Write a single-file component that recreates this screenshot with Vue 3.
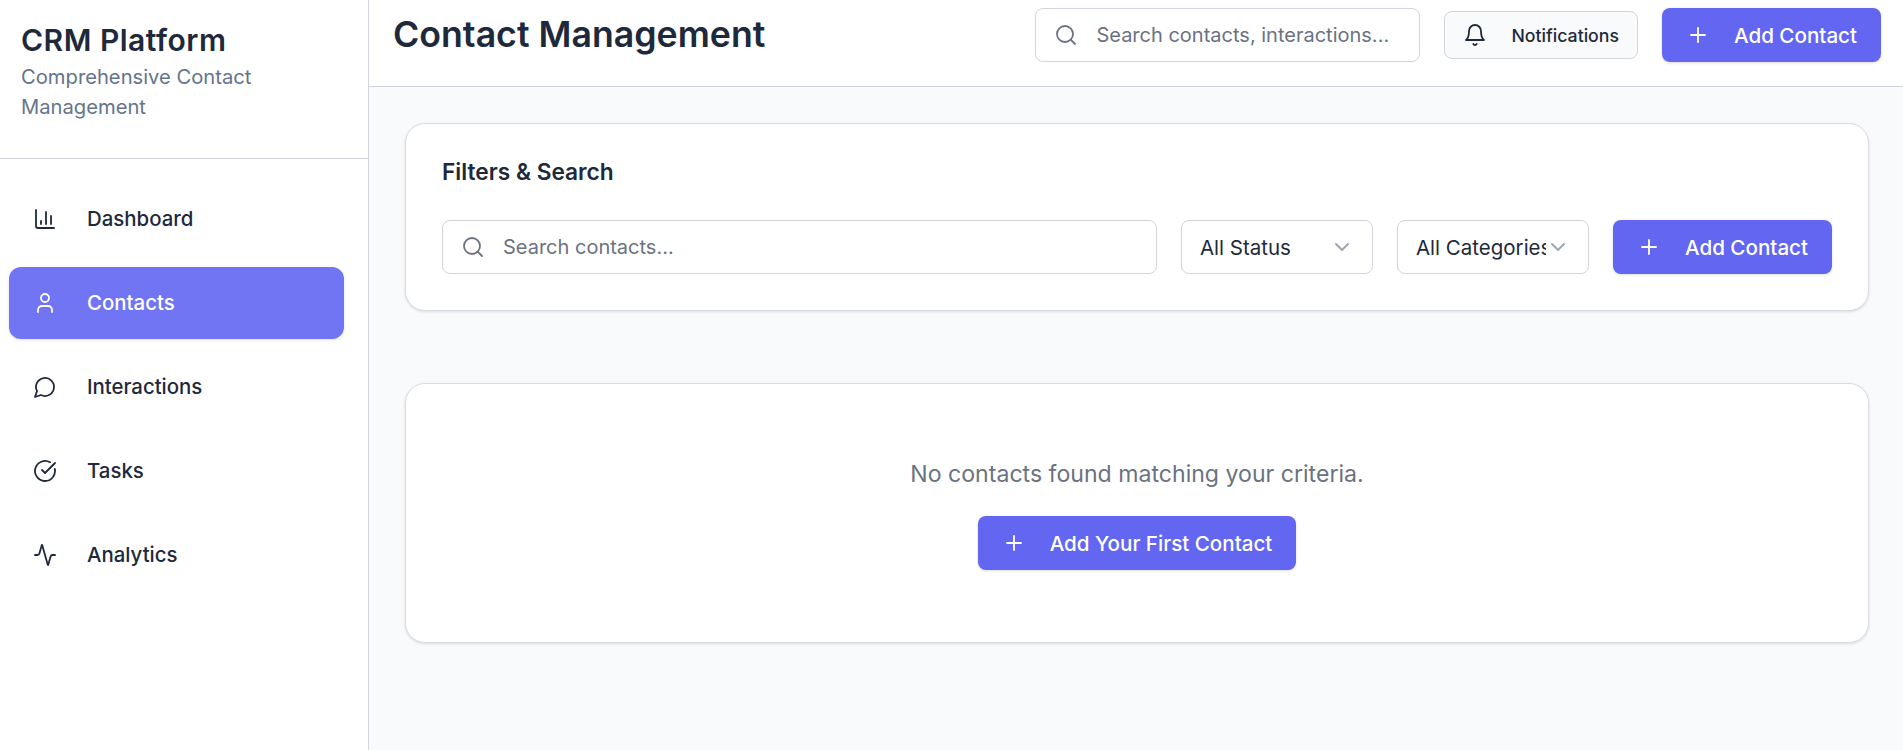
<script setup>
const navItems = [
  { label: 'Dashboard', icon: 'chart' },
  { label: 'Contacts', icon: 'user', active: true },
  { label: 'Interactions', icon: 'message' },
  { label: 'Tasks', icon: 'check' },
  { label: 'Analytics', icon: 'activity' },
]
const iconPaths = {
  chart: ['M3 3v16a2 2 0 0 0 2 2h16', 'M18 17V9', 'M13 17V5', 'M8 17v-3'],
  user: ['M19 21v-2a4 4 0 0 0-4-4H9a4 4 0 0 0-4 4v2', 'M12 11a4 4 0 1 0 0-8 4 4 0 0 0 0 8z'],
  message: ['M7.9 20A9 9 0 1 0 4 16.1L2 22Z'],
  check: ['M21.801 10A10 10 0 1 1 17 3.335', 'm9 11 3 3L22 4'],
  activity: ['M22 12h-2.48a2 2 0 0 0-1.93 1.46l-2.35 8.36a.25.25 0 0 1-.48 0L9.24 2.18a.25.25 0 0 0-.48 0l-2.35 8.36A2 2 0 0 1 4.49 12H2'],
}
</script>

<template>
  <div class="app">
    <aside class="sidebar">
      <div class="brand">
        <h1>CRM Platform</h1>
        <p>Comprehensive Contact Management</p>
      </div>
      <nav class="nav">
        <a v-for="item in navItems" :key="item.label" class="nav-item" :class="{ active: item.active }">
          <svg class="icon" viewBox="0 0 24 24"><path v-for="d in iconPaths[item.icon]" :key="d" :d="d" /></svg>
          <span>{{ item.label }}</span>
        </a>
      </nav>
    </aside>
    <div class="main">
      <header class="topbar">
        <h2>Contact Management</h2>
        <div class="actions">
          <label class="search top-search">
            <svg class="icon" viewBox="0 0 24 24"><path d="m21 21-4.3-4.3" /><circle cx="11" cy="11" r="8" /></svg>
            <input placeholder="Search contacts, interactions..." />
          </label>
          <button class="btn ghost">
            <svg class="icon" viewBox="0 0 24 24"><path d="M10.3 21a1.94 1.94 0 0 0 3.4 0" /><path d="M6 8a6 6 0 0 1 12 0c0 7 3 9 3 9H3s3-2 3-9" /></svg>
            Notifications
          </button>
          <button class="btn primary">
            <svg class="icon" viewBox="0 0 24 24"><path d="M5 12h14" /><path d="M12 5v14" /></svg>
            Add Contact
          </button>
        </div>
      </header>
      <main class="content">
        <section class="card filters">
          <h3>Filters &amp; Search</h3>
          <div class="filter-row">
            <label class="search grow">
              <svg class="icon" viewBox="0 0 24 24"><path d="m21 21-4.3-4.3" /><circle cx="11" cy="11" r="8" /></svg>
              <input placeholder="Search contacts..." />
            </label>
            <div class="select-wrap">
              <select><option>All Status</option></select>
              <svg class="chev" viewBox="0 0 24 24"><path d="m6 9 6 6 6-6" /></svg>
            </div>
            <div class="select-wrap">
              <select><option>All Categories</option></select>
              <svg class="chev" viewBox="0 0 24 24"><path d="m6 9 6 6 6-6" /></svg>
            </div>
            <button class="btn primary">
              <svg class="icon" viewBox="0 0 24 24"><path d="M5 12h14" /><path d="M12 5v14" /></svg>
              Add Contact
            </button>
          </div>
        </section>
        <section class="card empty">
          <p>No contacts found matching your criteria.</p>
          <button class="btn primary">
            <svg class="icon" viewBox="0 0 24 24"><path d="M5 12h14" /><path d="M12 5v14" /></svg>
            Add Your First Contact
          </button>
        </section>
      </main>
    </div>
  </div>
</template>

<style>
html, body { margin: 0; background: #fff; }
</style>

<style scoped>
.app {
  display: flex;
  height: 750px;
  overflow: hidden;
  font-family: Inter, "Liberation Sans", sans-serif;
  color: #1e293b;
}
.icon {
  width: 24px;
  height: 24px;
  flex: none;
  fill: none;
  stroke: currentColor;
  stroke-width: 1.8;
  stroke-linecap: round;
  stroke-linejoin: round;
}
.sidebar {
  width: 368px;
  flex: none;
  background: #fff;
  border-right: 1px solid #d1d5db;
}
.brand {
  height: 136px;
  padding: 22px 22px 0 21px;
  border-bottom: 1px solid #d1d5db;
}
.brand h1 {
  margin: 0 0 3px;
  padding-bottom: 1px;
  font-size: 30px;
  letter-spacing: 0.5px;
  line-height: 36px;
  font-weight: 600;
}
.brand p {
  margin: 0;
  font-size: 20.2px;
  line-height: 30px;
  color: #64748b;
}
.nav {
  padding: 24px 24px 0 9px;
  display: flex;
  flex-direction: column;
  gap: 12px;
}
.nav-item {
  height: 72px;
  display: flex;
  align-items: center;
  gap: 30px;
  padding-left: 24px;
  border-radius: 12px;
  font-size: 20.4px;
  font-weight: 500;
}
.nav-item span { padding-bottom: 2px; }
.nav-item.active {
  background: #7175f3;
  color: #fff;
  box-shadow: 0 1px 3px rgba(0, 0, 0, 0.12);
}
.main {
  flex: 1;
  min-width: 0;
  background: #f9fafb;
  display: flex;
  flex-direction: column;
}
.topbar {
  height: 87px;
  box-sizing: border-box;
  flex: none;
  background: #fff;
  border-bottom: 1px solid #d1d5db;
  padding: 8px 22px 0 24px;
  display: flex;
  justify-content: space-between;
  align-items: flex-start;
}
.topbar h2 {
  margin: 0;
  font-size: 35.7px;
  line-height: 52px;
  font-weight: 600;
  color: #1e293b;
}
.actions {
  display: flex;
  align-items: center;
  gap: 24px;
  height: 54px;
}
.search {
  height: 54px;
  box-sizing: border-box;
  display: flex;
  align-items: center;
  gap: 18px;
  padding: 0 18px;
  background: #fff;
  border: 1px solid #d1d5db;
  border-radius: 8px;
  color: #6b7280;
}
.top-search { width: 385px; }
.grow { flex: 1; }
.search input {
  flex: 1;
  min-width: 0;
  border: 0;
  outline: 0;
  padding: 0;
  background: transparent;
  font: 400 20px Inter, "Liberation Sans", sans-serif;
  color: #1e293b;
}
.search input::placeholder { color: #6b7280; opacity: 1; }
.btn {
  height: 54px;
  box-sizing: border-box;
  display: inline-flex;
  align-items: center;
  gap: 24px;
  padding: 0 24px;
  border: 0;
  border-radius: 8px;
  font-family: inherit;
  font-size: 20.6px;
  font-weight: 500;
}
.primary {
  background: #6366f1;
  color: #fff;
  box-shadow: 0 1px 3px rgba(0, 0, 0, 0.14);
}
.ghost {
  height: 48px;
  padding: 0 18px;
  background: #f9fafb;
  border: 1px solid #d1d5db;
  color: #1e293b;
  font-size: 17.7px;
}
.content {
  padding: 36px 34px 0 36px;
}
.card {
  background: #fff;
  border: 1px solid #d9dce3;
  border-radius: 20px;
  box-shadow: 0 1px 3px rgba(0, 0, 0, 0.12);
  box-sizing: border-box;
}
.filters {
  height: 188px;
  padding: 36px;
}
.filters h3 {
  margin: 0 0 24px;
  font-size: 22.7px;
  line-height: 24px;
  font-weight: 600;
  height: 36px;
}
.filter-row {
  display: flex;
  gap: 24px;
}
.select-wrap {
  position: relative;
  width: 192px;
  flex: none;
}
.select-wrap select {
  width: 100%;
  height: 54px;
  box-sizing: border-box;
  appearance: none;
  padding: 0 42px 0 18px;
  background: #fff;
  border: 1px solid #d1d5db;
  border-radius: 8px;
  font: 400 20.5px Inter, "Liberation Sans", sans-serif;
  color: #1e293b;
}
.chev {
  position: absolute;
  right: 19px;
  top: 15px;
  width: 24px;
  height: 24px;
  fill: none;
  stroke: #9ca3af;
  stroke-width: 1.8;
  stroke-linecap: round;
  stroke-linejoin: round;
  pointer-events: none;
}
.empty {
  margin-top: 72px;
  height: 260px;
  display: flex;
  flex-direction: column;
  align-items: center;
  padding-top: 72px;
}
.empty p {
  margin: 0 0 24px;
  font-size: 23.1px;
  line-height: 36px;
  color: #6b7280;
}
</style>
